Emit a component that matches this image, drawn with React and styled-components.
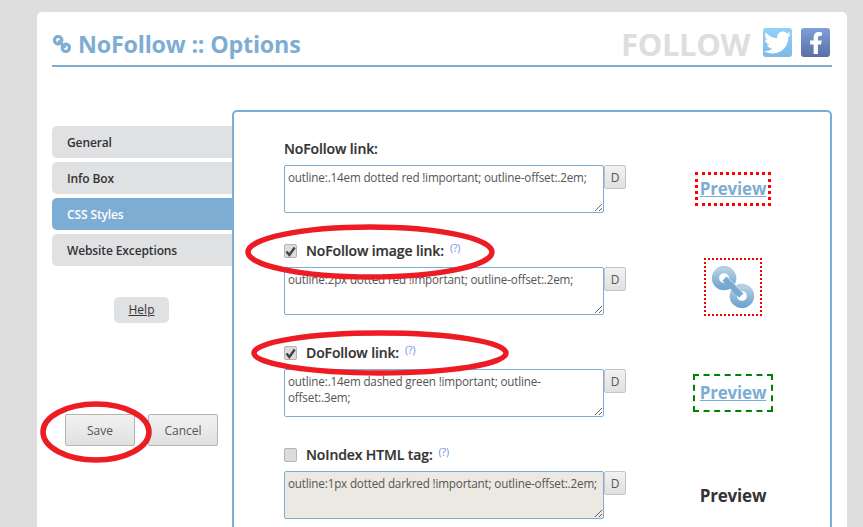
import React from 'react';
import styled, { createGlobalStyle } from 'styled-components';
import { FaTwitter, FaFacebookF } from 'react-icons/fa';

const BLUE = '#7eadd3';
const FONT = '"Open Sans", "Noto Sans", sans-serif';

const Global = createGlobalStyle`
  html, body { margin: 0; height: 527px; overflow: hidden; background: #dedede; }
  body { font-family: ${FONT}; }
  * { box-sizing: border-box; }
`;

const Page = styled.div`
  position: relative;
  width: 863px;
  height: 527px;
  padding: 12px 16px 0 37px;
  overflow: hidden;
`;
const Card = styled.main`
  background: #fff;
  border-radius: 5px 5px 0 0;
  width: 810px;
  height: 600px;
  padding: 0 15px;
`;
const Header = styled.header`
  height: 55px;
  border-bottom: 2px solid ${BLUE};
  display: flex;
  align-items: flex-start;
  justify-content: space-between;
`;
const TitleWrap = styled.div`
  display: flex;
  align-items: center;
  gap: 7px;
  height: 53px;
  padding: 11px 0 0 1px;
`;
const Title = styled.h1`
  margin: 0;
  font-size: 23.3px;
  font-weight: 700;
  letter-spacing: -0.2px;
  color: ${BLUE};
  line-height: 40px;
`;
const Follow = styled.div`
  display: flex;
  align-items: center;
  height: 53px;
  padding: 8px 2px 0 0;
`;
const FollowText = styled.span`
  font-size: 31px;
  font-weight: 700;
  color: #dedede;
  letter-spacing: -0.4px;
  margin-right: 13px;
  padding-top: 2px;
`;
const Social = styled.a`
  width: 29px;
  height: 29px;
  border-radius: 3px;
  display: flex;
  align-items: center;
  justify-content: center;
  color: #fff;
  margin-left: ${p => p.$gap}px;
  background: linear-gradient(180deg, ${p => p.$from}, ${p => p.$to});
`;
const Body = styled.div`
  display: flex;
  padding-top: 43px;
`;
const Side = styled.aside`
  width: 180px;
  padding-top: 16px;
  flex: none;
`;
const Nav = styled.nav`
  display: flex;
  flex-direction: column;
  gap: 4px;
`;
const NavItem = styled.div`
  height: 32px;
  line-height: 34px;
  padding-left: 15px;
  border-radius: 5px 0 0 5px;
  font-size: 12px;
  font-weight: 600;
  letter-spacing: -0.12px;
  background: ${p => (p.$active ? BLUE : '#e0e1e3')};
  color: ${p => (p.$active ? '#fff' : '#333')};
`;
const HelpWrap = styled.div`
  display: flex;
  padding: 31px 0 0 62px;
`;
const HelpBtn = styled.a`
  width: 55px;
  height: 26px;
  line-height: 26px;
  text-align: center;
  border-radius: 5px;
  background: #e0e1e3;
  color: #333;
  font-size: 12px;
  text-decoration: underline;
`;
const Actions = styled.div`
  display: flex;
  gap: 13px;
  padding: 91px 0 0 13px;
`;
const ActionBtn = styled.button`
  width: 70px;
  height: 32px;
  border: 1px solid #b4b4b4;
  border-radius: 2px;
  background: linear-gradient(180deg, #f2f2f2, #e0e0e0);
  font: 12px ${FONT};
  color: #555;
  padding: 0;
`;
const Panel = styled.section`
  width: 600px;
  height: 480px;
  border: 2px solid ${BLUE};
  border-radius: 5px 5px 0 0;
  padding: 28px 0 0 50px;
  flex: none;
`;
const Row = styled.div`
  display: grid;
  grid-template-columns: 320px 22px 1fr;
  grid-template-rows: 18px 48px;
  row-gap: 7px;
  height: 102px;
`;
const LabelLine = styled.div`
  grid-column: 1 / -1;
  display: flex;
  align-items: center;
  padding-bottom: 2px;
  font-size: 14px;
  font-weight: 600;
  letter-spacing: -0.12px;
  -webkit-text-stroke: 0.2px #333;
  color: #333;
`;
const Check = styled.span`
  width: 13px;
  height: 14px;
  margin: 2px 9px 0 0;
  border: 1px solid #b4b4b4;
  border-radius: 2px;
  background: #dcdcdc;
  display: flex;
  align-items: center;
  justify-content: center;
  flex: none;
`;
const HelpMark = styled.sup`
  font-size: 10.5px;
  font-weight: 400;
  color: #6f94e0;
  -webkit-text-stroke: 0;
  margin: -5px 0 0 6px;
  line-height: 10px;
`;
const Area = styled.textarea`
  width: 320px;
  height: 48px;
  margin: 0;
  padding: 3px 3px;
  border: 1px solid ${BLUE};
  border-radius: 2px;
  background: ${p => (p.disabled ? '#ebe9e2' : '#fff')};
  color: #555;
  font: 11.7px/16px ${FONT};
  letter-spacing: -0.18px;
  outline: none;
`;
const DBtn = styled.button`
  width: 22px;
  height: 24px;
  padding: 0;
  border: 1px solid #c4c4c4;
  border-radius: 2px;
  background: linear-gradient(180deg, #f2f2f2, #e0e0e0);
  font: 12px ${FONT};
  color: #555;
`;
const PreviewCell = styled.div`
  display: flex;
  align-items: center;
  justify-content: center;
  padding-left: 10px;
  padding-bottom: ${p => p.$lift || 0}px;
  height: 48px;
`;
const PreviewLink = styled.a`
  font-size: 17px;
  font-weight: 700;
  letter-spacing: -0.2px;
  line-height: 24px;
  color: ${BLUE};
  text-decoration: underline;
  outline: ${p => p.$outline};
  outline-offset: ${p => p.$offset}px;
`;
const PreviewPlain = styled.span`
  font-size: 17px;
  font-weight: 700;
  letter-spacing: -0.2px;
  color: #333;
`;
const ImgFrame = styled.div`
  width: 58px;
  height: 58px;
  flex: none;
  border: 2px dotted #f00;
  display: flex;
  align-items: center;
  justify-content: center;
`;
const Overlay = styled.svg`
  position: absolute;
  left: 0;
  top: 0;
  pointer-events: none;
`;

const LinkIcon = ({ size, flat, id }) => (
  <svg width={size} height={size} viewBox="0 0 40 40">
    <defs>
      <linearGradient id={id} x1="0" y1="0" x2="0" y2="1">
        <stop offset="0" stopColor={flat ? BLUE : '#b3cfe4'} />
        <stop offset="1" stopColor={flat ? BLUE : '#74a7cf'} />
      </linearGradient>
    </defs>
    <circle cx="11.5" cy="11.5" r="8.2" fill="none" stroke={`url(#${id})`} strokeWidth="7" />
    <circle cx="28.5" cy="28.5" r="8.2" fill="none" stroke={`url(#${id})`} strokeWidth="7" />
    <path d="M12 12 L28 28" stroke={flat ? BLUE : '#7aa9cf'} strokeWidth="6" />
    <path d="M12 12 L28 28" stroke="#fff" strokeOpacity=".35" strokeWidth="1.5" transform="translate(2 -2)" />
  </svg>
);

const CheckMark = () => (
  <svg width="11" height="11" viewBox="0 0 11 11">
    <path d="M1.5 5.5 L4.3 9 L9.7 1.5" fill="none" stroke="#444" strokeWidth="2.4" />
  </svg>
);

const Q = () => <HelpMark>(?)</HelpMark>;

const rows = [
  {
    label: 'NoFollow link:',
    value: 'outline:.14em dotted red !important; outline-offset:.2em;',
    preview: <PreviewLink $outline="3px dotted #f00" $offset={2}>Preview</PreviewLink>,
  },
  {
    label: 'NoFollow image link:',
    checkbox: 'on',
    value: 'outline:2px dotted red !important; outline-offset:.2em;',
    lift: 8,
    preview: <ImgFrame><LinkIcon size={42} id="lk" /></ImgFrame>,
  },
  {
    label: 'DoFollow link:',
    checkbox: 'on',
    value: 'outline:.14em dashed green !important; outline-offset:.3em;',
    preview: <PreviewLink $outline="2px dashed green" $offset={5}>Preview</PreviewLink>,
  },
  {
    label: 'NoIndex HTML tag:',
    checkbox: 'off',
    disabled: true,
    value: 'outline:1px dotted darkred !important; outline-offset:.2em;',
    preview: <PreviewPlain>Preview</PreviewPlain>,
  },
];

export default function App() {
  return (
    <Page>
      <Global />
      <Card>
        <Header>
          <TitleWrap>
            <LinkIcon size={18} flat id="lt" />
            <Title>NoFollow :: Options</Title>
          </TitleWrap>
          <Follow>
            <FollowText>FOLLOW</FollowText>
            <Social $from="#95d1f7" $to="#7cbbe8"><FaTwitter size={27} /></Social>
            <Social $gap={9} $from="#7f9fdb" $to="#5a6ea3"><FaFacebookF size={22} /></Social>
          </Follow>
        </Header>
        <Body>
          <Side>
            <Nav>
              <NavItem>General</NavItem>
              <NavItem>Info Box</NavItem>
              <NavItem $active>CSS Styles</NavItem>
              <NavItem>Website Exceptions</NavItem>
            </Nav>
            <HelpWrap><HelpBtn>Help</HelpBtn></HelpWrap>
            <Actions>
              <ActionBtn>Save</ActionBtn>
              <ActionBtn>Cancel</ActionBtn>
            </Actions>
          </Side>
          <Panel>
            {rows.map(r => (
              <Row key={r.label}>
                <LabelLine>
                  {r.checkbox && <Check>{r.checkbox === 'on' && <CheckMark />}</Check>}
                  {r.label}
                  {r.checkbox && <Q />}
                </LabelLine>
                <Area readOnly disabled={r.disabled} defaultValue={r.value} />
                <DBtn>D</DBtn>
                <PreviewCell $lift={r.lift}>{r.preview}</PreviewCell>
              </Row>
            ))}
          </Panel>
        </Body>
      </Card>
      <Overlay width="863" height="527" viewBox="0 0 863 527">
        <g fill="none" stroke="#ed1c24" strokeWidth="5.5">
          <ellipse cx="370" cy="252" rx="122" ry="25" />
          <ellipse cx="380" cy="353" rx="126" ry="20" />
          <ellipse cx="96" cy="432" rx="53" ry="28" />
        </g>
      </Overlay>
    </Page>
  );
}
